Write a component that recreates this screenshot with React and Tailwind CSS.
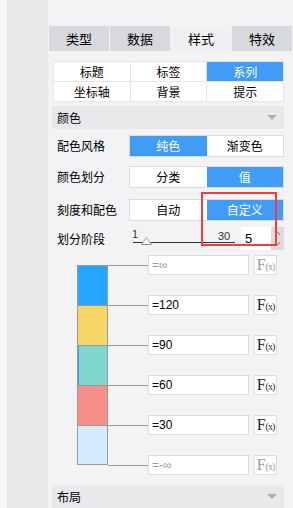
import React from "react";

const F = { fontFamily: '"Noto Sans CJK SC", "Noto Sans", sans-serif' };

function Fx({ dim }) {
  return (
    <div className="w-[23px] h-[20px] bg-white border border-[#dcdcdc] flex items-center justify-center">
      <span className={`font-['Liberation_Serif',serif] leading-none flex items-end ${dim ? "text-[#999]" : "text-[#222]"}`}>
        <span className="text-[16px] leading-[14px]">F</span>
        <span className="text-[10px] leading-[10px] tracking-[-1px]">(x)</span>
      </span>
    </div>
  );
}

function Seg({ items, active }) {
  return (
    <div className="w-[155px] h-[22px] flex border border-[#dcdcdc] bg-white">
      {items.map((t, i) => (
        <div
          key={t}
          className={`flex-1 flex items-center justify-center text-[12px] ${
            i === active ? "bg-[#419cf8] text-white" : "text-black"
          }`}
        >
          {t}
        </div>
      ))}
    </div>
  );
}

function Header({ title }) {
  return (
    <div className="ml-[4px] w-[232px] h-[23px] bg-[#e9e9eb] flex items-center justify-between pl-[5px] pr-[7px] text-[12px] text-black">
      <span>{title}</span>
      <span className="w-0 h-0 border-l-[5px] border-r-[5px] border-t-[5px] border-l-transparent border-r-transparent border-t-[#b0b0b0]" />
    </div>
  );
}

export default function App() {
  const thresholds = [
    { v: "=∞", dim: true },
    { v: "=120" },
    { v: "=90" },
    { v: "=60" },
    { v: "=30" },
    { v: "=-∞", dim: true },
  ];
  return (
    <div style={F} className="w-[293px] h-[508px] flex overflow-hidden">
      <div className="w-[7px] bg-[#f7f7f3]" />
      <div className="w-[41px] bg-[#e8e8e8]" />
      <div className="flex-1 bg-[#f3f3f5] flex flex-col pt-[26px] relative">
        {/* tabs */}
        <div className="flex gap-[1px] pl-[1px]">
          {["类型", "数据", "样式", "特效"].map((t, i) => (
            <div
              key={t}
              className={`w-[60px] h-[25px] shrink-0 flex items-center justify-center text-[13px] text-black ${
                i === 2 ? "bg-[#f0f0f2]" : "bg-[#d8d9dd]"
              }`}
            >
              {t}
            </div>
          ))}
        </div>
        {/* sub tabs */}
        <div className="mt-[10px] ml-[5px] w-[231px] grid grid-cols-3 gap-[1px] bg-[#e6e6e8] border border-[#e6e6e8]">
          {["标题", "标签", "系列", "坐标轴", "背景", "提示"].map((t, i) => (
            <div
              key={t}
              className={`h-[19px] flex items-center justify-center text-[12px] ${
                i === 2 ? "bg-[#419cf8] text-white" : "bg-white text-black"
              }`}
            >
              {t}
            </div>
          ))}
        </div>
        <div className="mt-[4px]">
          <Header title="颜色" />
        </div>
        {/* rows */}
        <div className="mt-[6px] ml-[9px] flex items-center">
          <div className="w-[72px] text-[12px] text-black">配色风格</div>
          <Seg items={["纯色", "渐变色"]} active={0} />
        </div>
        <div className="mt-[9px] ml-[9px] flex items-center">
          <div className="w-[72px] text-[12px] text-black">颜色划分</div>
          <Seg items={["分类", "值"]} active={1} />
        </div>
        <div className="mt-[11px] ml-[9px] flex items-center">
          <div className="w-[72px] text-[12px] text-black">刻度和配色</div>
          <Seg items={["自动", "自定义"]} active={1} />
        </div>
        {/* slider row */}
        <div className="mt-[6px] ml-[9px] flex items-center h-[23px]">
          <div className="w-[72px] text-[12px] text-black">划分阶段</div>
          <div className="relative w-[106px] h-[23px]">
            <span className="absolute left-[3px] top-[-1px] text-[11px] text-[#333] font-['Liberation_Sans',sans-serif]">1</span>
            <span className="absolute left-[89px] top-[1px] text-[11px] text-[#333] font-['Liberation_Sans',sans-serif]">30</span>
            <div className="absolute left-[4px] right-0 top-[15px] h-px bg-[#333]" />
            <svg className="absolute left-[12px] top-[10px]" width="11" height="8" viewBox="0 0 11 8">
              <polygon points="5.5,0.5 10.5,7.5 0.5,7.5" fill="#fff" stroke="#999" />
            </svg>
          </div>
          <div className="ml-[6px] w-[30px] h-[23px] bg-white flex items-center pl-[4px] text-[13px] text-black font-['Liberation_Sans',sans-serif]">
            5
          </div>
          <div className="w-[13px] h-[23px] bg-[#dcdcdc] flex items-center justify-center">
            <svg width="7" height="17" viewBox="0 0 7 17" fill="none" stroke="#777" strokeWidth="1">
              <polyline points="1,5 3.5,2 6,5" />
              <polyline points="1,12 3.5,15 6,12" />
            </svg>
          </div>
        </div>
        {/* red highlight */}
        <div className="absolute left-[153px] top-[192px] w-[76px] h-[54px] border-2 border-[#f53b3b] pointer-events-none" />
        {/* legend */}
        <div className="mt-[5px] flex">
          <div className="ml-[29px] mt-[10px] w-[31px] flex flex-col border border-[#999] h-[200px]">
            <div className="h-[40px] bg-[#22a6ff] border-b border-[#999]" />
            <div className="h-[40px] bg-[#f5d563] border-b border-[#999]" />
            <div className="h-[40px] bg-[#7fd7cf] border-b border-[#999] border-l border-l-[#3d9bf9]" />
            <div className="h-[40px] bg-[#f88f8b] border-b border-[#999]" />
            <div className="flex-1 bg-[#d4eafd]" />
          </div>
          <div className="w-[40px] flex flex-col gap-[20px]">
            {thresholds.map((t, i) => (
              <div key={i} className="h-[20px] flex items-center">
                <div className="w-full h-px bg-[#999]" />
              </div>
            ))}
          </div>
          <div className="flex flex-col gap-[20px]">
            {thresholds.map((t, i) => (
              <div key={i} className="flex items-center gap-[5px]">
                <div
                  className={`w-[101px] h-[20px] bg-white border border-[#dcdcdc] flex items-center pl-[3px] text-[12px] font-['Liberation_Sans',sans-serif] ${
                    t.dim ? "text-[#999]" : "text-black"
                  }`}
                >
                  {t.v}
                </div>
                <Fx dim={t.dim} />
              </div>
            ))}
          </div>
        </div>
        <div className="mt-[10px]">
          <Header title="布局" />
        </div>
      </div>
    </div>
  );
}
